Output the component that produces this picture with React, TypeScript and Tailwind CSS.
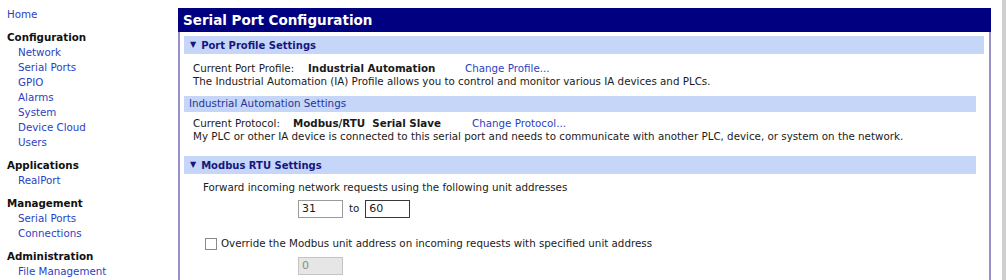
const navGroups = [
  {
    title: 'Configuration',
    items: ['Network', 'Serial Ports', 'GPIO', 'Alarms', 'System', 'Device Cloud', 'Users'],
  },
  { title: 'Applications', items: ['RealPort'] },
  { title: 'Management', items: ['Serial Ports', 'Connections'] },
  { title: 'Administration', items: ['File Management'] },
];

function Sidebar() {
  return (
    <div className="w-[178px] shrink-0 pt-[7px] pl-[7px] leading-[15px]">
      <div className="text-[#2a3fbf]">Home</div>
      {navGroups.map((group) => (
        <div key={group.title} className="mt-[8px]">
          <div className="font-bold text-[#111]">{group.title}</div>
          {group.items.map((item) => (
            <div key={item} className="pl-[11px] text-[#2a3fbf]">
              {item}
            </div>
          ))}
        </div>
      ))}
    </div>
  );
}

function SectionBar({ title }: { title: string }) {
  return (
    <div className="flex h-[18px] items-center bg-[#c6d6f8] pl-[6px] text-[10px] font-bold text-[#161680]">
      <span className="mr-[5px] text-[8px]">▼</span>
      {title}
    </div>
  );
}

export default function App() {
  return (
    <div className="flex h-[280px] w-[1006px] overflow-hidden bg-white font-['DejaVu_Sans',sans-serif] text-[10.3px] text-[#1a1a1a]">
      <Sidebar />

      <div className="mt-[8px] flex w-[813px] shrink-0 flex-col">
        <div className="flex h-[24px] items-center bg-[#000080] pl-[5px] text-[13.5px] font-bold text-white">
          Serial Port Configuration
        </div>
        <div className="flex-1 border-x-2 border-[#9890c8] pt-[4px] pl-[4px] pr-[5px]">
          <SectionBar title="Port Profile Settings" />

          <div className="mt-[8px] pl-[9px] leading-[13px]">
            <div className="flex">
              <span className="w-[115px]">Current Port Profile:</span>
              <span className="w-[157px] font-bold">Industrial Automation</span>
              <span className="text-[#2a3fbf]">Change Profile...</span>
            </div>
            <div>
              The Industrial Automation (IA) Profile allows you to control and monitor various IA devices and PLCs.
            </div>
          </div>

          <div className="mr-[8px]">
            <div className="mt-[8px] flex h-[16px] items-center bg-[#c6d6f8] pl-[5px] text-[#24349a]">
              Industrial Automation Settings
            </div>

            <div className="mt-[5px] pl-[9px] leading-[13px]">
              <div className="flex">
                <span className="w-[100px]">Current Protocol:</span>
                <span className="w-[179px] font-bold whitespace-pre">Modbus/RTU  Serial Slave</span>
                <span className="text-[#2a3fbf]">Change Protocol...</span>
              </div>
              <div>
                My PLC or other IA device is connected to this serial port and needs to communicate with another PLC,
                device, or system on the network.
              </div>
            </div>

            <div className="mt-[13px]">
              <SectionBar title="Modbus RTU Settings" />
            </div>

            <div className="mt-[7px] pl-[19px] leading-[13px]">
              Forward incoming network requests using the following unit addresses
            </div>
            <div className="mt-[6px] flex items-center pl-[114px]">
              <div className="flex h-[18px] w-[45px] items-center border border-[#9a9a9a] pl-[3px] text-[11px]">31</div>
              <span className="mx-[6px]">to</span>
              <div className="flex h-[18px] w-[45px] items-center border border-[#3a3a3a] pl-[3px] text-[11px]">60</div>
            </div>

            <div className="mt-[19px] flex h-[14px] items-center pl-[21px]">
              <span className="mr-[4px] h-[12px] w-[12px] border border-[#8a8a8a] bg-white" />
              Override the Modbus unit address on incoming requests with specified unit address
            </div>
            <div className="mt-[6px] pl-[114px]">
              <div className="flex h-[18px] w-[45px] items-center border border-[#c4c4c4] bg-[#e6e6e6] pl-[3px] text-[11px] text-[#8a8a8a]">
                0
              </div>
            </div>
          </div>
        </div>
      </div>

      <div className="ml-[11px] w-[4px] bg-[#cfcfcf]" />
    </div>
  );
}
